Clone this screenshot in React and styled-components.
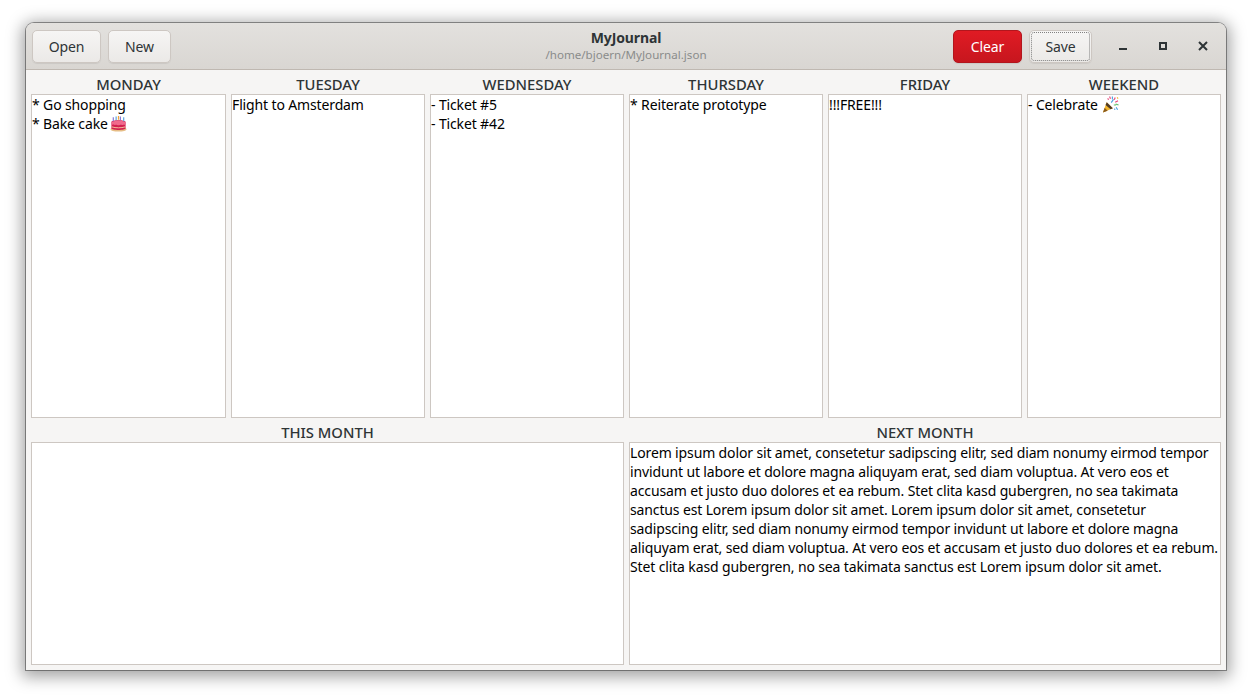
import React from "react";
import styled, { createGlobalStyle } from "styled-components";

const Global = createGlobalStyle`
  html, body { margin: 0; padding: 0; background: #fff; }
  body { font-family: "Noto Sans", "Open Sans", sans-serif; }
`;

const Page = styled.div`
  width: 1252px;
  height: 699px;
  padding: 23px 26px 29px;
  box-sizing: border-box;
  overflow: hidden;
`;

const Window = styled.div`
  width: 1200px;
  height: 647px;
  display: flex;
  flex-direction: column;
  background: #f6f5f4;
  border-radius: 8px 8px 0 0;
  box-shadow: 0 0 0 1px rgba(0,0,0,0.38), 0 3px 16px 4px rgba(0,0,0,0.36);
  overflow: hidden;
`;

const HeaderBar = styled.header`
  height: 47px;
  flex: none;
  box-sizing: border-box;
  display: grid;
  grid-template-columns: 1fr auto 1fr;
  align-items: center;
  padding: 0 6px;
  background: linear-gradient(#e3e1de, #d9d6d2);
  border-bottom: 1px solid #bfb8b1;
`;

const Group = styled.div`
  display: flex;
  align-items: center;
  gap: 7px;
  justify-content: ${(p) => (p.$end ? "flex-end" : "flex-start")};
`;

const Btn = styled.button`
  height: 33px;
  width: ${(p) => p.$w}px;
  box-sizing: border-box;
  padding: 0;
  font: 14px "Noto Sans", sans-serif;
  letter-spacing: -0.1px;
  color: ${(p) => (p.$danger ? "#fff" : "#2e3436")};
  background: ${(p) =>
    p.$danger ? "linear-gradient(#e01b24, #c7161e)" : "linear-gradient(#f6f5f4, #ebe9e7)"};
  border: 1px solid ${(p) => (p.$danger ? "#b2161d" : "#cdc7c2")};
  border-radius: 5px;
  box-shadow: 0 1px 1px rgba(0,0,0,0.07);
  position: relative;
  ${(p) =>
    p.$focus &&
    `&::after { content: ""; position: absolute; inset: 1px; border: 1px dotted #808080; border-radius: 3px; }`}
`;

const TitleBlock = styled.div`
  display: flex;
  flex-direction: column;
  align-items: center;
  margin-top: -1px;
`;

const Title = styled.div`
  font-size: 14px;
  font-weight: 700;
  letter-spacing: -0.1px;
  line-height: 18px;
  color: #2e3436;
`;

const Subtitle = styled.div`
  font-size: 11.6px;
  line-height: 16px;
  color: #8a8c8b;
`;

const WinControls = styled.div`
  display: flex;
  align-items: center;
  margin-left: 3px;
  gap: 16px;
  padding: 0 5px 0 9px;
`;

const WinIcon = styled.svg`
  width: 24px;
  height: 24px;
  display: block;
  color: #2e3436;
`;

const Content = styled.main`
  flex: 1;
  min-height: 0;
  display: grid;
  grid-template-columns: 195px repeat(5, 194px);
  grid-template-rows: 348px 1fr;
  column-gap: 5px;
  padding: 5px 5px 5px;
`;

const Section = styled.section`
  grid-column: span ${(p) => p.$span};
  display: flex;
  flex-direction: column;
  min-width: 0;
  min-height: 0;
`;

const Label = styled.div`
  height: 19px;
  font-size: 14.8px;
  font-weight: 500;
  line-height: 18px;
  text-align: center;
  color: #2e3436;
`;

const Editor = styled.div`
  flex: 1;
  background: #fff;
  border: 1px solid #cdc7c2;
  margin-bottom: ${(p) => (p.$top ? "5px" : "0")};
  font-size: 14px;
  letter-spacing: -0.135px;
  line-height: 19px;
  color: #000;
  white-space: pre;
  overflow: hidden;
`;

const Emoji = styled.svg`
  width: 17px;
  height: 17px;
  vertical-align: -3px;
  margin-left: ${(p) => p.$gap}px;
`;

const Cake = () => (
  <Emoji viewBox="0 0 18 18" $gap={-1}>
    <ellipse cx="9" cy="15" rx="8.6" ry="2.6" fill="#e6bd86" />
    <path d="M1.5 7.5C1.5 5 16.5 5 16.5 7.5V14C16.5 16.4 1.5 16.4 1.5 14Z" fill="#d3214f" />
    <path d="M1.5 8C3 5.5 15 5.5 16.5 8V10c-1.2.9-2 .1-3 .5-1 .5-2-.4-3 0s-2 .5-3 0-2 .4-3-.2-2 .4-2.5-.3Z" fill="#f06a8c" />
    <path d="M2 12.6c4 1.3 10 1.3 14 0" stroke="#f4c59c" strokeWidth="1" fill="none" />
    <path d="M3.5 2.5v4M11 1.5v4" stroke="#8c7ad6" strokeWidth="1.3" />
    <path d="M6.5 1.5v4M14.5 2.5v4" stroke="#5fa8e0" strokeWidth="1.3" />
    <path d="M9 1v4" stroke="#f2a63c" strokeWidth="1.3" />
  </Emoji>
);

const Popper = () => (
  <Emoji viewBox="0 0 18 18" $gap={1}>
    <path d="M1 17.5L5 6.5l6.5 6.5Z" fill="#f2b52c" />
    <path d="M1 17.5l1.8-5 3.2 3.2Z" fill="#8a5a1c" />
    <path d="M5 6.5l6.5 6.5-2.4 1L3.8 9.5Z" fill="#4e3a26" />
    <g fill="none" strokeWidth="1.2">
      <path d="M8 .5l1 2.5M6 2.5l1 1.5" stroke="#e8457a" />
      <path d="M11 .5v3M9.8 7l2.4-3.4" stroke="#4aa3df" />
      <path d="M14 1.5l-1 2.5M17 5l-3 1.5" stroke="#e8457a" />
      <path d="M14.5 8.5l3 1M12.5 9.5h2.5" stroke="#5fbf6b" />
      <path d="M15 12l1.5 2.5M13 13.5l1 1" stroke="#4aa3df" />
      <path d="M16 1.5l1 1.2" stroke="#f0b429" />
    </g>
  </Emoji>
);

const days = [
  ["MONDAY", <>{"* Go shopping\n* Bake cake "}<Cake /></>],
  ["TUESDAY", "Flight to Amsterdam"],
  ["WEDNESDAY", "- Ticket #5\n- Ticket #42"],
  ["THURSDAY", "* Reiterate prototype"],
  ["FRIDAY", "!!!FREE!!!"],
  ["WEEKEND", <>{"- Celebrate "}<Popper /></>],
];

const lorem = [
  "Lorem ipsum dolor sit amet, consetetur sadipscing elitr, sed diam nonumy eirmod tempor",
  "invidunt ut labore et dolore magna aliquyam erat, sed diam voluptua. At vero eos et",
  "accusam et justo duo dolores et ea rebum. Stet clita kasd gubergren, no sea takimata",
  "sanctus est Lorem ipsum dolor sit amet. Lorem ipsum dolor sit amet, consetetur",
  "sadipscing elitr, sed diam nonumy eirmod tempor invidunt ut labore et dolore magna",
  "aliquyam erat, sed diam voluptua. At vero eos et accusam et justo duo dolores et ea rebum.",
  "Stet clita kasd gubergren, no sea takimata sanctus est Lorem ipsum dolor sit amet.",
].join("\n");

export default function App() {
  return (
    <Page>
      <Global />
      <Window>
        <HeaderBar>
          <Group>
            <Btn $w={69}>Open</Btn>
            <Btn $w={63}>New</Btn>
          </Group>
          <TitleBlock>
            <Title>MyJournal</Title>
            <Subtitle>/home/bjoern/MyJournal.json</Subtitle>
          </TitleBlock>
          <Group $end>
            <Btn $w={69} $danger>Clear</Btn>
            <Btn $w={63} $focus>Save</Btn>
            <WinControls>
              <WinIcon viewBox="0 0 24 24"><rect x="8" y="14" width="8" height="2" fill="currentColor" /></WinIcon>
              <WinIcon viewBox="0 0 24 24"><rect x="9" y="9" width="6" height="6" fill="none" stroke="currentColor" strokeWidth="2" /></WinIcon>
              <WinIcon viewBox="0 0 24 24"><path d="M8 8l8 8M16 8l-8 8" stroke="currentColor" strokeWidth="2" fill="none" /></WinIcon>
            </WinControls>
          </Group>
        </HeaderBar>
        <Content>
          {days.map(([name, text]) => (
            <Section $span={1} key={name}>
              <Label>{name}</Label>
              <Editor $top>{text}</Editor>
            </Section>
          ))}
          <Section $span={3}>
            <Label>THIS MONTH</Label>
            <Editor />
          </Section>
          <Section $span={3}>
            <Label>NEXT MONTH</Label>
            <Editor>{lorem}</Editor>
          </Section>
        </Content>
      </Window>
    </Page>
  );
}
